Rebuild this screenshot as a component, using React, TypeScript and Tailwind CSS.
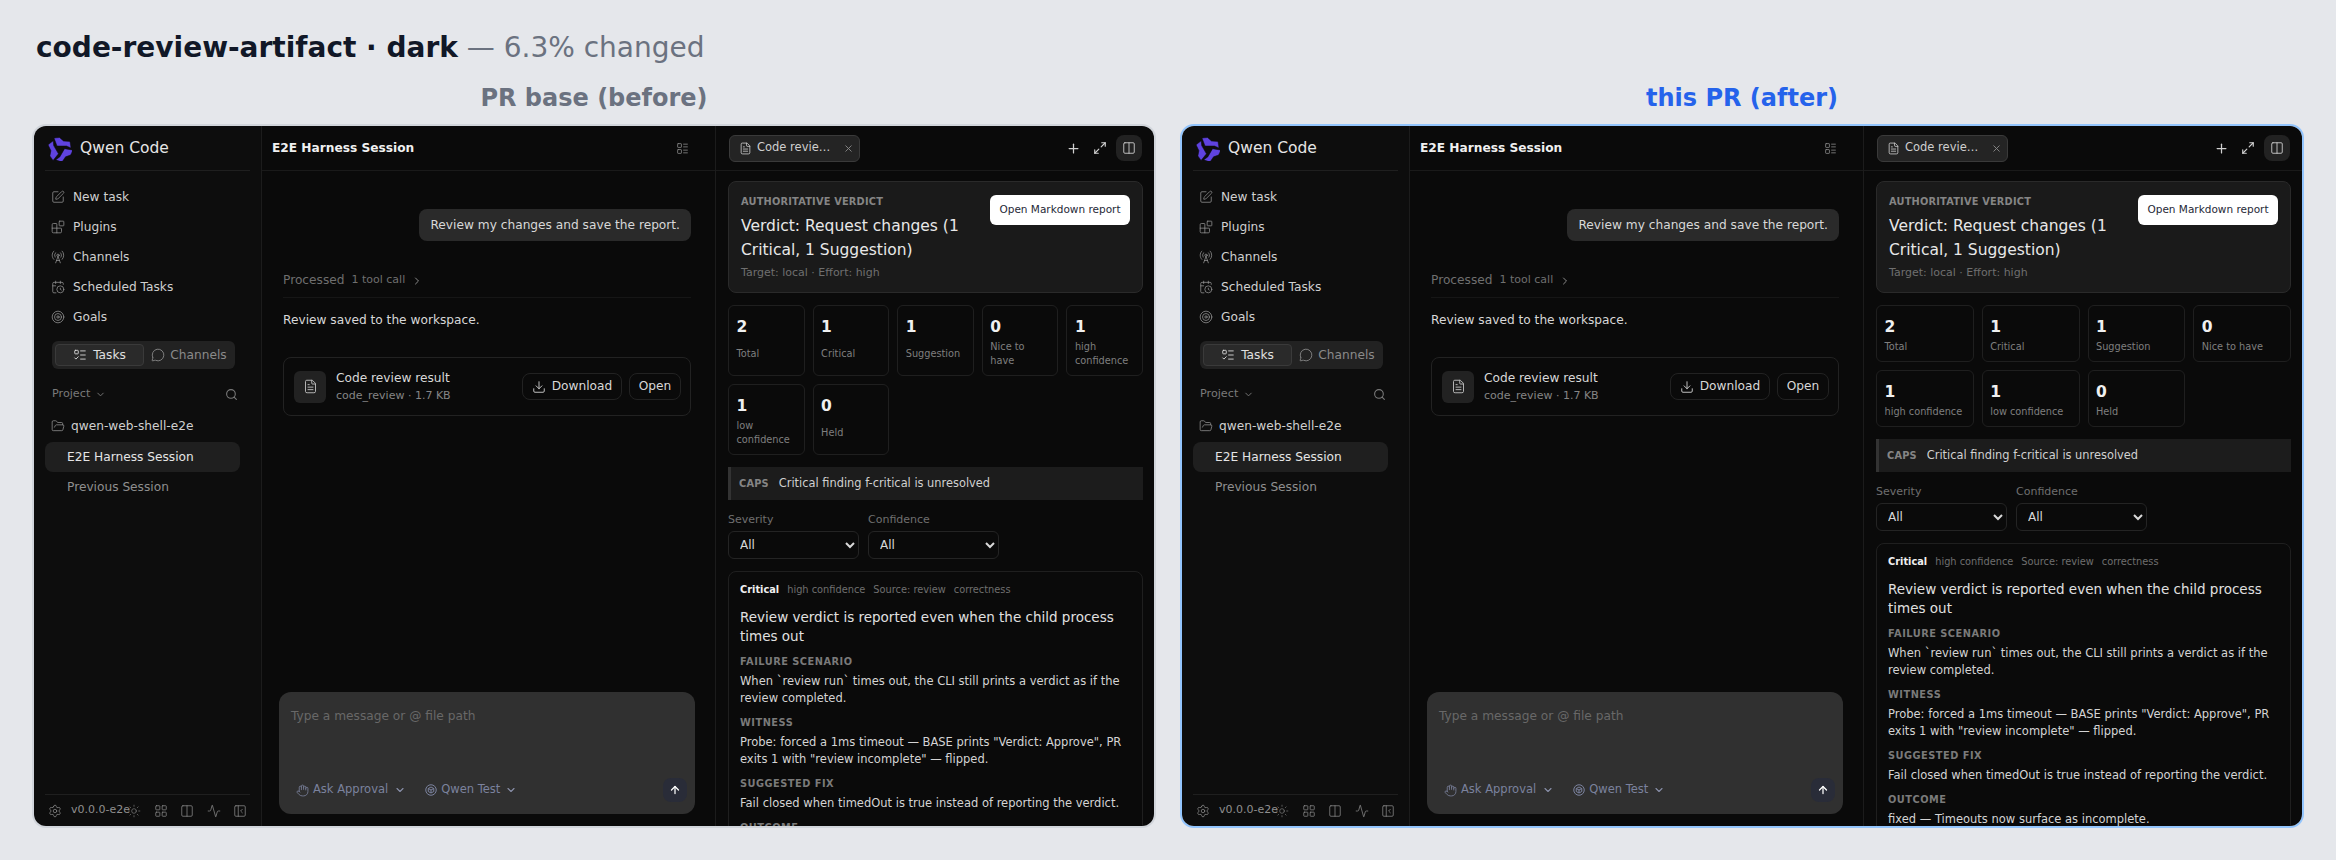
import React from "react";
import {
  Activity,
  ArrowUp,
  Blocks,
  CalendarClock,
  ChevronDown,
  ChevronRight,
  Columns2,
  Download,
  FileText,
  FolderOpen,
  Hand,
  LayoutGrid,
  LayoutList,
  ListTodo,
  Maximize2,
  MessageCircle,
  PanelLeftClose,
  Plus,
  RadioTower,
  Search,
  Settings,
  SquarePen,
  Sun,
  Target,
  X,
} from "lucide-react";

const navItems = [
  { label: "New task", icon: SquarePen },
  { label: "Plugins", icon: Blocks },
  { label: "Channels", icon: RadioTower },
  { label: "Scheduled Tasks", icon: CalendarClock },
  { label: "Goals", icon: Target },
];

const stats = [
  { value: 2, label: "Total" },
  { value: 1, label: "Critical" },
  { value: 1, label: "Suggestion" },
  { value: 0, label: "Nice to have" },
  { value: 1, label: "high confidence" },
  { value: 1, label: "low confidence" },
  { value: 0, label: "Held" },
];

const QwenLogo = () => (
  <svg width="24" height="24" viewBox="0 0 24 24">
    {[0, 120, 240].map((angle) => (
      <path
        key={angle}
        transform={`rotate(${angle} 12 12.500)`}
        d="M6 1 L11.500 .5 L15.500 4 L22 4.500 L23 11 L18.500 9 L9 9 Z"
        fill="#5f43e0"
        stroke="#0d0d0d"
        strokeWidth="0.5"
      />
    ))}
  </svg>
);

const ModelIcon = () => (
  <svg width="12" height="12" viewBox="0 0 24 24" fill="none" stroke="currentColor" strokeWidth="2">
    <circle cx="12" cy="12" r="10.500" />
    <path d="M12 6l5.500 3v6l-5.500 3-5.500-3V9z" />
    <path d="M6.500 9l5.500 3 5.500-3M12 12v6" />
  </svg>
);

const SectionLabel = ({ children }: { children: React.ReactNode }) => (
  <div className="mt-[8px] text-[9.800px] font-bold leading-[16px] tracking-[0.5px] text-[#7a7a7a]">
    {children}
  </div>
);

const SectionText = ({ children }: { children: React.ReactNode }) => (
  <p className="mt-[3px] text-[11.500px] leading-[17px] text-[#d4d4d4]">{children}</p>
);

const Sidebar = () => (
  <aside className="flex w-[228px] shrink-0 flex-col border-r border-[#1c1c1c] bg-[#0d0d0d]">
    <div className="mx-[11px] flex h-[45px] shrink-0 items-center gap-[8px] border-b border-[#1f1f1f] px-[3px] pt-[2px]">
      <QwenLogo />
      <span className="text-[15.500px] text-[#e5e5e5]">Qwen Code</span>
    </div>
    <nav className="mt-[11px] flex flex-col px-[17px]">
      {navItems.map((item) => (
        <div key={item.label} className="flex h-[30px] items-center gap-[8px] text-[12.200px] text-[#d0d0d0]">
          <item.icon size={14} strokeWidth={1.25} className="text-[#9a9a9a]" />
          {item.label}
        </div>
      ))}
    </nav>
    <div className="mx-[18px] mt-[9px] flex h-[28px] w-[183px] items-center gap-[2px] rounded-[6px] bg-[#222222] px-[3px] text-[12.200px]">
      <div className="flex h-[22px] w-[89px] items-center justify-center gap-[6px] rounded-[4px] border border-[#3a3a3a] bg-[#2a2a2a] text-[#e0e0e0]">
        <ListTodo size={14} strokeWidth={1.5} />
        Tasks
      </div>
      <div className="flex flex-1 items-center justify-center gap-[5px] text-[#8a8a8a]">
        <MessageCircle size={14} strokeWidth={1.5} />
        Channels
      </div>
    </div>
    <div className="mt-[17px] flex items-center justify-between pl-[18px] pr-[23px] text-[11.200px] text-[#7a7a7a]">
      <span className="flex items-center gap-[5px]">
        Project
        <ChevronDown size={11} />
      </span>
      <Search size={13} />
    </div>
    <div className="mt-[14px] flex items-center gap-[6px] pl-[17px] text-[12.200px] text-[#d0d0d0]">
      <FolderOpen size={14} strokeWidth={1.25} className="text-[#9a9a9a]" />
      qwen-web-shell-e2e
    </div>
    <div className="ml-[11px] mr-[21px] mt-[7px] flex h-[30px] items-center rounded-[8px] bg-[#1f1f1f] pl-[22px] text-[12.200px] text-[#e5e5e5]">
      E2E Harness Session
    </div>
    <div className="mx-[11px] flex h-[30px] items-center pl-[22px] text-[12.200px] text-[#8f8f8f]">
      Previous Session
    </div>
    <div className="mx-[11px] mt-auto flex h-[32px] items-center border-t border-[#1f1f1f] pl-[3px] text-[#8f8f8f]">
      <Settings size={14} strokeWidth={1.25} />
      <span className="ml-[9px] w-[56px] whitespace-nowrap text-[11px]">v0.0.0-e2e</span>
      <Sun size={14} strokeWidth={1} />
      <LayoutGrid size={14} strokeWidth={1.25} className="ml-[12.500px]" />
      <Columns2 size={14} strokeWidth={1.25} className="ml-[12.500px]" />
      <Activity size={14} strokeWidth={1.25} className="ml-[12.500px]" />
      <PanelLeftClose size={14} strokeWidth={1.25} className="ml-[12.500px]" />
    </div>
  </aside>
);

const MainColumn = () => (
  <main className="flex w-[454px] shrink-0 flex-col border-r border-[#1c1c1c] bg-[#0a0a0a]">
    <div className="flex h-[45px] shrink-0 items-center justify-between border-b border-[#1a1a1a] pl-[10px] pr-[26px] pt-[1px]">
      <span className="text-[12.200px] font-bold text-[#f0f0f0]">E2E Harness Session</span>
      <LayoutList size={13} strokeWidth={1.5} className="text-[#8a8a8a]" />
    </div>
    <div className="flex flex-1 flex-col pl-[21px] pr-[24px]">
      <div className="mt-[38px] self-end rounded-[8px] bg-[#2a2a2a] px-[11px] py-[8px] text-[12.200px] leading-[16px] text-[#d8d8d8]">
        Review my changes and save the report.
      </div>
      <div className="mt-[31px] flex h-[26px] items-center gap-[7px] border-b border-[#161616] pb-[8px] text-[#6f6f6f]">
        <span className="text-[12.200px]">Processed</span>
        <span className="text-[11px]">1 tool call</span>
        <ChevronRight size={12} className="-ml-[1px] text-[#8a8a8a]" />
      </div>
      <p className="mt-[13px] text-[12.200px] leading-[18px] text-[#d8d8d8]">Review saved to the workspace.</p>
      <div className="mt-[28px] flex h-[59px] items-center rounded-[8px] border border-[#222222] pl-[10px] pr-[9px]">
        <div className="flex h-[32px] w-[32px] items-center justify-center rounded-[6px] bg-[#222222]">
          <FileText size={15} strokeWidth={1.5} className="text-[#bdbdbd]" />
        </div>
        <div className="ml-[10px] flex flex-1 flex-col">
          <span className="text-[12.200px] leading-[18px] text-[#d8d8d8]">Code review result</span>
          <span className="text-[11px] leading-[17px] text-[#858585]">code_review · 1.7 KB</span>
        </div>
        <button className="flex h-[27px] w-[100px] items-center justify-center gap-[6px] rounded-[8px] border border-[#222222] text-[12.200px] text-[#d8d8d8]">
          <Download size={14} strokeWidth={1.5} />
          Download
        </button>
        <button className="ml-[7px] h-[27px] w-[52px] rounded-[8px] border border-[#222222] text-[12.200px] text-[#d8d8d8]">
          Open
        </button>
      </div>
      <div className="-mx-[4px] mb-[12px] mt-auto flex h-[122px] flex-col rounded-[12px] bg-[#303030] pb-[12px] pl-[12px] pr-[8px] pt-[15px]">
        <div className="text-[12.200px] leading-[18px] text-[#686868]">Type a message or @ file path</div>
        <div className="mt-auto flex items-center text-[11.500px] text-[#7b829e]">
          <span className="ml-[5px] flex items-center gap-[4px]">
            <Hand size={13} strokeWidth={1.5} />
            Ask Approval
            <ChevronDown size={12} strokeWidth={2.25} className="ml-[2px] text-[#8a90aa]" />
          </span>
          <span className="ml-[19px] flex items-center gap-[4px]">
            <ModelIcon />
            Qwen Test
            <ChevronDown size={12} strokeWidth={2.25} className="ml-[1px] text-[#8a90aa]" />
          </span>
          <div className="ml-auto flex h-[24px] w-[24px] items-center justify-center rounded-[8px] bg-[#292c38]">
            <ArrowUp size={12} strokeWidth={2.5} className="text-white" />
          </div>
        </div>
      </div>
    </div>
  </main>
);

const ReviewPanel = ({ wide }: { wide: boolean }) => (
  <section className="flex min-w-0 flex-1 flex-col bg-[#0a0a0a]">
    <div className="flex h-[45px] shrink-0 items-center border-b border-[#1a1a1a] pl-[13px] pr-[12px]">
      <div className="flex h-[27px] w-[131px] items-center rounded-[6px] border border-[#3a3a3a] bg-[#242424] pl-[9px] pr-[5px] text-[11.500px] text-[#cfcfcf]">
        <FileText size={13} strokeWidth={1.5} />
        <span className="ml-[5px] flex-1">Code revie…</span>
        <X size={11} className="text-[#8a8a8a]" />
      </div>
      <Plus size={15} className="ml-auto text-[#d0d0d0]" />
      <Maximize2 size={14} className="ml-[12px] text-[#d0d0d0]" />
      <div className="ml-[9px] flex h-[26px] w-[26px] items-center justify-center rounded-[8px] bg-[#222222]">
        <Columns2 size={14} strokeWidth={1.5} className="text-[#d0d0d0]" />
      </div>
    </div>
    <div className="min-h-0 flex-1 overflow-hidden pl-[12px] pr-[11px] pt-[10px]">
      <div className="flex items-start justify-between rounded-[8px] border border-[#2a2a2a] bg-[#1a1a1a] pb-[11px] pl-[12px] pr-[12px] pt-[13px]">
        <div className="w-[230px]">
          <div className="text-[9.800px] font-bold leading-[14px] tracking-[0.2px] text-[#858585]">AUTHORITATIVE VERDICT</div>
          <h3 className="mt-[5px] text-[15.500px] leading-[24px] text-[#e8e8e8]">
            Verdict: Request changes (1 Critical, 1 Suggestion)
          </h3>
          <div className="mt-[3px] text-[11px] leading-[16px] text-[#6f6f6f]">Target: local · Effort: high</div>
        </div>
        <button className="h-[30px] w-[140px] rounded-[6px] bg-white text-[10.500px] text-[#1f2937]">
          Open Markdown report
        </button>
      </div>
      <div className={wide ? "mt-[12px] grid grid-cols-4 gap-[8px]" : "mt-[12px] grid grid-cols-5 gap-[8px]"}>
        {stats.map((stat) => (
          <div key={stat.label} className="flex flex-col rounded-[6px] border border-[#1f1f1f] pb-[7px] pl-[7.500px] pr-[7px] pt-[11px]">
            <div className="text-[15.500px] font-bold leading-[20px] text-[#f0f0f0]">{stat.value}</div>
            <div
              className={
                wide
                  ? "mt-[3px] flex items-center text-[9.750px] leading-[14px] text-[#7f7f7f]"
                  : "mt-[3px] flex min-h-[28px] items-center text-[9.750px] leading-[14px] text-[#7f7f7f]"
              }
            >
              {stat.label}
            </div>
          </div>
        ))}
      </div>
      <div className="mt-[12px] flex h-[33px] items-center gap-[10px] border-l-[3px] border-[#333333] bg-[#1c1c1c] pl-[8px] pt-[1px]">
        <span className="text-[9.800px] font-bold tracking-[0.2px] text-[#858585]">CAPS</span>
        <span className="text-[11.400px] text-[#d0d0d0]">Critical finding f-critical is unresolved</span>
      </div>
      <div className="mt-[12px] flex gap-[9px]">
        {["Severity", "Confidence"].map((name) => (
          <label key={name} className="flex flex-col gap-[3px] text-[11px] leading-[16px] text-[#6f6f6f]">
            {name}
            <select className="h-[28px] w-[131px] rounded-[6px] border border-[#242424] bg-[#0a0a0a] px-[7px] text-[12px] text-[#d8d8d8] [color-scheme:dark]">
              <option>All</option>
            </select>
          </label>
        ))}
      </div>
      <article className="mt-[12px] rounded-t-[8px] border border-[#1f1f1f] px-[11px] pt-[10px]">
        <div className="flex items-center gap-[8px] text-[9.800px] leading-[16px] text-[#6f6f6f]">
          <span className="font-bold text-[#f0f0f0]">Critical</span>
          <span>high confidence</span>
          <span>Source: review</span>
          <span>correctness</span>
        </div>
        <h4 className="mt-[10px] text-[13.500px] leading-[19px] text-[#e0e0e0]">
          Review verdict is reported even when the child process times out
        </h4>
        <SectionLabel>FAILURE SCENARIO</SectionLabel>
        <SectionText>When `review run` times out, the CLI still prints a verdict as if the review completed.</SectionText>
        <SectionLabel>WITNESS</SectionLabel>
        <SectionText>Probe: forced a 1ms timeout — BASE prints "Verdict: Approve", PR exits 1 with "review incomplete" — flipped.</SectionText>
        <SectionLabel>SUGGESTED FIX</SectionLabel>
        <SectionText>Fail closed when timedOut is true instead of reporting the verdict.</SectionText>
        <SectionLabel>OUTCOME</SectionLabel>
        <SectionText>fixed — Timeouts now surface as incomplete.</SectionText>
      </article>
    </div>
  </section>
);

const ShellWindow = ({ after }: { after: boolean }) => (
  <div
    className={
      after
        ? "flex h-[704px] overflow-hidden rounded-[14px] border-2 border-[#93c5fd]"
        : "flex h-[704px] overflow-hidden rounded-[14px] border-2 border-[#d1d5db]"
    }
  >
    <Sidebar />
    <MainColumn />
    <ReviewPanel wide={after} />
  </div>
);

export default function App() {
  return (
    <div className="h-[860px] overflow-hidden bg-[#e5e7eb] px-[32px] pt-[30px] font-['DejaVu_Sans',sans-serif]">
      <h1 className="pl-[4px] text-[28px] leading-[36px] text-[#111827]">
        <span className="font-bold">code-review-artifact · dark</span>
        <span className="text-[#6b7280]"> — 6.3% changed</span>
      </h1>
      <div className="mt-[16px] grid grid-cols-2 gap-[24px]">
        <div>
          <h2 className="mb-[10px] text-center text-[24px] font-bold leading-[32px] text-[#6b7280]">PR base (before)</h2>
          <ShellWindow after={false} />
        </div>
        <div>
          <h2 className="mb-[10px] text-center text-[24px] font-bold leading-[32px] text-[#2563eb]">this PR (after)</h2>
          <ShellWindow after={true} />
        </div>
      </div>
    </div>
  );
}
